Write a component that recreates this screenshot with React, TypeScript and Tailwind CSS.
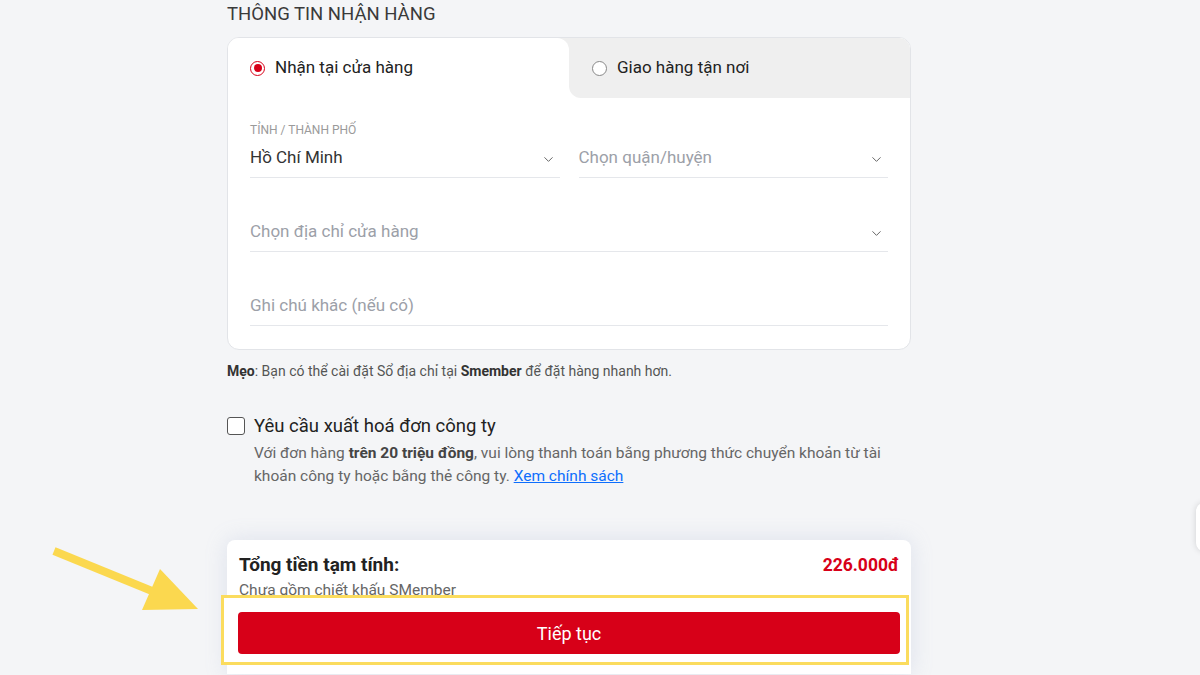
import React from "react";
import { ChevronDown } from "lucide-react";

function Select({ text, placeholder, className = "" }: { text: string; placeholder?: boolean; className?: string }) {
  return (
    <div className={`flex h-[40px] items-center justify-between border-b border-[#e5e7eb] ${className}`}>
      <span className={`text-[17px] ${placeholder ? "text-[#9ca0a8]" : "text-[#333]"}`}>{text}</span>
      <ChevronDown size={15} strokeWidth={1.6} className="mr-[4px] mt-[3px] text-[#666]" />
    </div>
  );
}

export default function App() {
  return (
    <div
      className="relative h-[675px] w-[1200px] overflow-hidden bg-[#f4f5f7] text-[#333]"
      style={{ fontFamily: "Roboto, 'Noto Sans', 'Liberation Sans', sans-serif" }}
    >
      <div className="ml-[227px] w-[684px] pt-[2px]">
        <h2 className="h-[24px] text-[18.5px] leading-[24px] text-[#3a3a3a]">THÔNG TIN NHẬN HÀNG</h2>

        <div className="mt-[11px] overflow-hidden rounded-xl border border-[#e2e4e8] bg-white">
          <div className="flex h-[60px]">
            <div className="flex-1 bg-[#efefef]">
              <div className="flex h-full items-center gap-[10px] rounded-tr-xl bg-white pl-[22px]">
                <span className="flex h-[15px] w-[15px] items-center justify-center rounded-full border-[1.5px] border-[#d70018]">
                  <span className="h-[8px] w-[8px] rounded-full bg-[#d70018]" />
                </span>
                <span className="text-[17px] text-[#222]">Nhận tại cửa hàng</span>
              </div>
            </div>
            <div className="flex-1 bg-white">
              <div className="flex h-full items-center gap-[10px] rounded-bl-xl bg-[#efefef] pl-[23px]">
                <span className="h-[15px] w-[15px] rounded-full border border-[#888] bg-white" />
                <span className="text-[17px] text-[#222]">Giao hàng tận nơi</span>
              </div>
            </div>
          </div>

          <div className="px-[22px] pb-[23px] pt-[24px]">
            <div className="grid grid-cols-2 gap-x-[19px]">
              <div>
                <div className="h-[16px] text-[12px] leading-[16px] text-[#9a9a9a]">TỈNH / THÀNH PHỐ</div>
                <Select text="Hồ Chí Minh" />
              </div>
              <div className="pt-[16px]">
                <Select text="Chọn quận/huyện" placeholder />
              </div>
            </div>
            <Select text="Chọn địa chỉ cửa hàng" placeholder className="mt-[34px]" />
            <div className="mt-[34px] flex h-[40px] items-center border-b border-[#e5e7eb]">
              <span className="text-[17px] text-[#9ca0a8]">Ghi chú khác (nếu có)</span>
            </div>
          </div>
        </div>

        <p className="mt-[12px] text-[14px] leading-[18px] text-[#555]">
          <b className="text-[#333]">Mẹo</b>: Bạn có thể cài đặt Sổ địa chỉ tại <b className="text-[#333]">Smember</b> để đặt hàng nhanh hơn.
        </p>

        <div className="mt-[34px] flex items-center gap-[9px]">
          <span className="h-[18px] w-[18px] rounded-[3px] border-[1.5px] border-[#555] bg-white" />
          <span className="text-[18.5px] leading-[24px] text-[#222]">Yêu cầu xuất hoá đơn công ty</span>
        </div>
        <p className="ml-[27px] mt-[4px] w-[630px] text-[15.5px] leading-[23px] text-[#666]">
          Với đơn hàng <b className="text-[#444]">trên 20 triệu đồng</b>, vui lòng thanh toán bằng phương thức chuyển khoản từ tài khoản công ty hoặc bằng thẻ công ty.{" "}
          <a className="text-[#0d6efd] underline">Xem chính sách</a>
        </p>

        <div className="relative mt-[52px] rounded-t-lg bg-white px-[11px] pb-[20px] pt-[13px] shadow-[0_0_22px_rgba(140,160,200,0.22)]">
          <div className="flex h-[24px] items-center justify-between pl-[1px] pr-[1px]">
            <span className="text-[19px] font-bold text-[#222]">Tổng tiền tạm tính:</span>
            <span className="text-[17.5px] font-bold text-[#d70018]">226.000đ</span>
          </div>
          <div className="mt-[3px] pl-[1px] text-[15.5px] leading-[20px] text-[#666]">Chưa gồm chiết khấu SMember</div>
          <div className="absolute left-[-6px] top-[55px] h-[70px] w-[688px] border-[3px] border-[#fbdc5e] bg-white" />
          <button className="relative z-10 mt-[12px] flex h-[42px] w-full items-center justify-center rounded-[4px] bg-[#d70018] text-[18px] text-white">
            Tiếp tục
          </button>
        </div>
      </div>

      <svg className="absolute left-0 top-0" width="260" height="675" viewBox="0 0 260 675">
        <line x1="54" y1="551" x2="152" y2="591" stroke="#fbd84f" strokeWidth="8" />
        <polygon points="142,610 160,569 198,609" fill="#fbd84f" />
      </svg>

      <div className="absolute right-[-40px] top-[503px] h-[48px] w-[44px] rounded-lg bg-white shadow-[0_0_6px_rgba(0,0,0,0.15)]" />
    </div>
  );
}
